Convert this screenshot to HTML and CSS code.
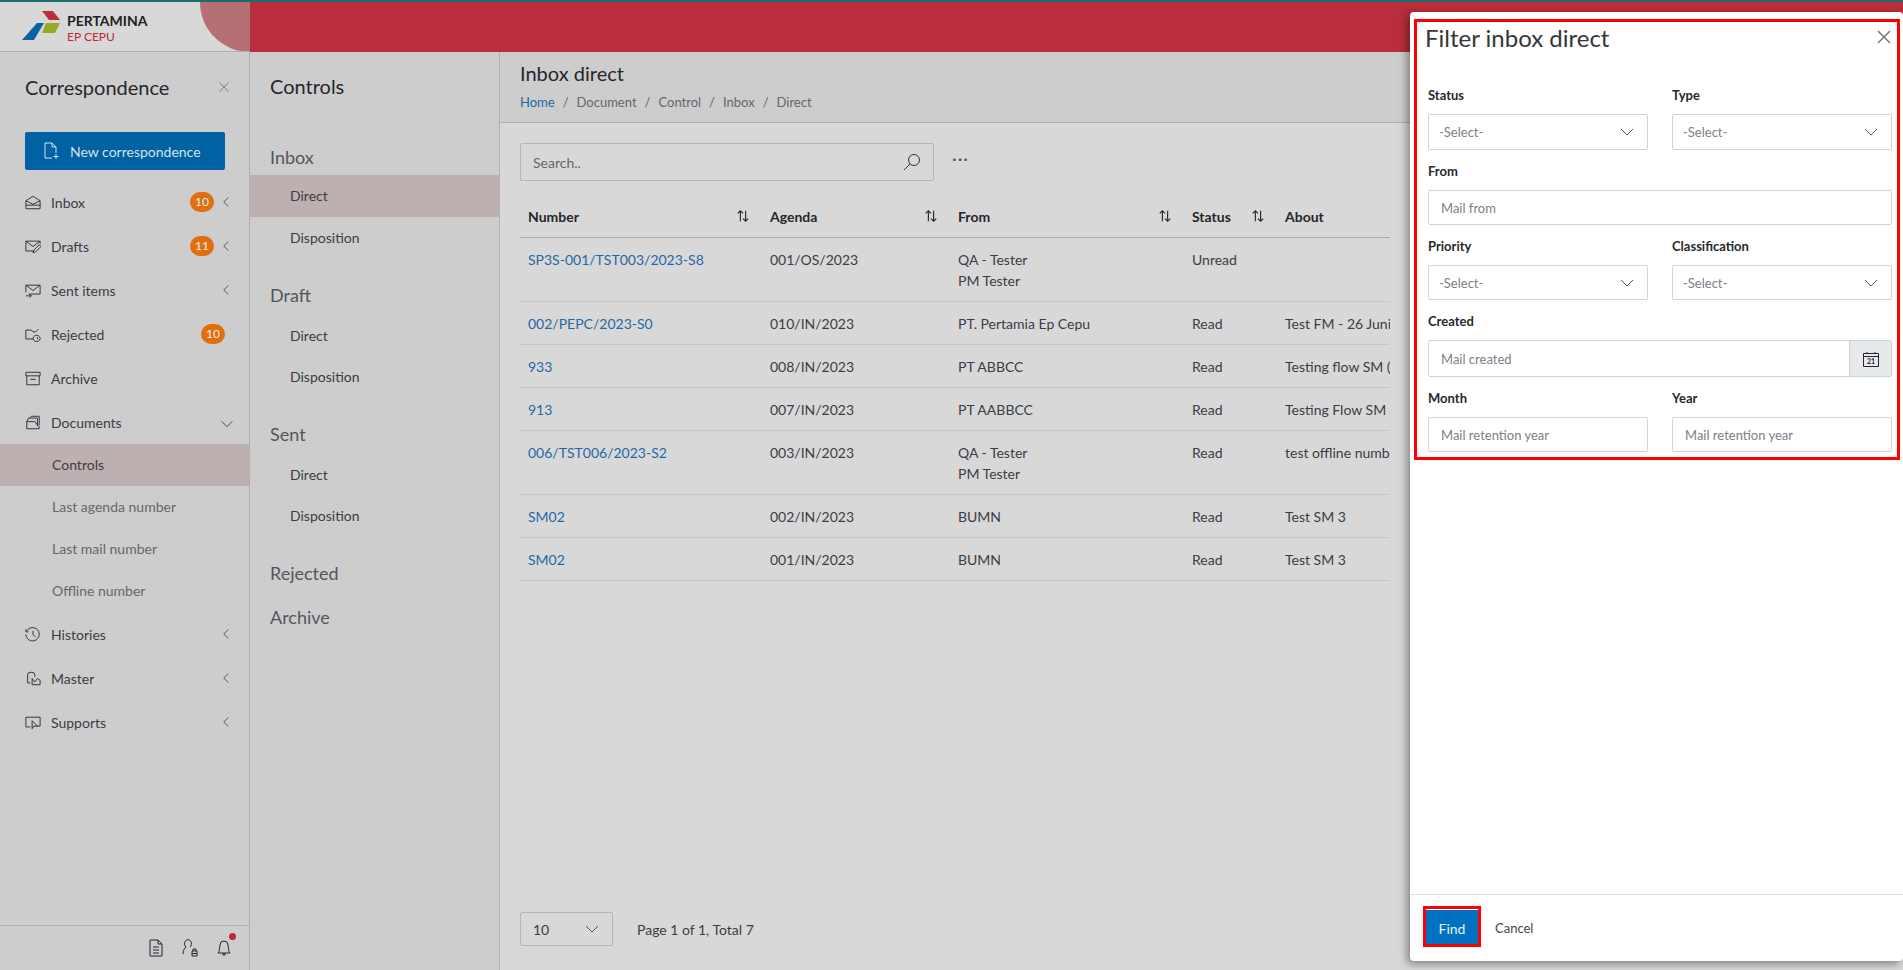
FILE: index.html
```html
<!DOCTYPE html>
<html lang="en">
<head>
<meta charset="utf-8">
<title>Inbox direct</title>
<link rel="stylesheet" href="styles.css">
</head>
<body>

<svg class="defs" aria-hidden="true">
  <symbol id="i-left" viewBox="0 0 16 16"><path d="M11 2 5 8l6 6"/></symbol>
  <symbol id="i-down" viewBox="0 0 16 16"><path d="M2 5l6 6 6-6"/></symbol>
  <symbol id="i-sort" viewBox="0 0 16 16"><path d="M5 14V2M2 5l3-3 3 3M11 2v12M8 11l3 3 3-3"/></symbol>
  <symbol id="i-x" viewBox="0 0 16 16"><path d="M2 2l12 12M14 2 2 14"/></symbol>
</svg>

<div class="topline"></div>
<header class="topbar">
  <div class="brand">
    <svg class="logo" viewBox="0 0 38 30" width="38" height="30">
      <polygon points="20,0 31,0 38,9 27,9" fill="#b8303f"/>
      <polygon points="15,12 22,12 12,29 0,29" fill="#0a62a5"/>
      <polygon points="24,12 38,12 33,22 20,22" fill="#93ab22"/>
    </svg>
    <div class="brand-text">
      <div class="brand-name">PERTAMINA</div>
      <div class="brand-sub">EP CEPU</div>
    </div>
    <div class="brand-curve"></div>
  </div>
</header>

<div class="layout">
  <aside class="sidebar">
    <div class="side-head">
      <h2>Correspondence</h2>
      <svg class="ico-x"><use href="#i-x"/></svg>
    </div>
    <a class="new-btn">
      <svg width="16" height="18" viewBox="0 0 16 18"><path d="M9 16H2V1h7l4 4v6M9 1v4h4M13 12v5M10.500 14.500h5"/></svg>
      New correspondence
    </a>
    <nav class="nav">
      <div class="nav-row">
        <svg class="nav-ico" viewBox="0 0 18 16"><path d="M1 6l8-5 8 5v9H1zM1 6l8 4 8-4M1 11h16"/></svg>
        <span class="nav-label">Inbox</span><span class="badge">10</span>
        <svg class="chev"><use href="#i-left"/></svg>
      </div>
      <div class="nav-row">
        <svg class="nav-ico" viewBox="0 0 18 16"><path d="M10 13H1V2h16v3M1 2l8 6 8-6M9 15l1-3 6-6 2 2-6 6z"/></svg>
        <span class="nav-label">Drafts</span><span class="badge">11</span>
        <svg class="chev"><use href="#i-left"/></svg>
      </div>
      <div class="nav-row">
        <svg class="nav-ico" viewBox="0 0 18 16"><path d="M4 12H17V2H1v8M1 2l8 6 8-6M1 14h6M5 12l2 2-2 2"/></svg>
        <span class="nav-label">Sent items</span>
        <svg class="chev"><use href="#i-left"/></svg>
      </div>
      <div class="nav-row">
        <svg class="nav-ico" viewBox="0 0 18 16"><path d="M9 13H1V3h6l2 2h3l3-3M13 9a4 3.500 0 1 0 .1 0M14 11v2M14 14v.5"/></svg>
        <span class="nav-label">Rejected</span><span class="badge shift">10</span>
      </div>
      <div class="nav-row">
        <svg class="nav-ico" viewBox="0 0 18 16"><path d="M1 1h16v4H1zM2 5v10h14V5M6 9h6"/></svg>
        <span class="nav-label">Archive</span>
      </div>
      <div class="nav-row">
        <svg class="nav-ico" viewBox="0 0 18 16"><path d="M2 15V7h9l5 6v2zM2 7l2-4h10v9M5 3l2-2h9v10"/></svg>
        <span class="nav-label">Documents</span>
        <svg class="chev chev-down"><use href="#i-down"/></svg>
      </div>
      <div class="nav-sub active">Controls</div>
      <div class="nav-sub">Last agenda number</div>
      <div class="nav-sub">Last mail number</div>
      <div class="nav-sub">Offline number</div>
      <div class="nav-row">
        <svg class="nav-ico" viewBox="0 0 18 16"><path d="M2 4a7.500 7.500 0 1 1-1 4M1 2v3h3M9 4v4l3 3"/></svg>
        <span class="nav-label">Histories</span>
        <svg class="chev"><use href="#i-left"/></svg>
      </div>
      <div class="nav-row">
        <svg class="nav-ico" viewBox="0 0 18 16"><path d="M3 3a4 2 0 0 1 8 0v3M3 3v10h3M8 15V8l3 4 3-4 3 2v5z"/></svg>
        <span class="nav-label">Master</span>
        <svg class="chev"><use href="#i-left"/></svg>
      </div>
      <div class="nav-row">
        <svg class="nav-ico" viewBox="0 0 18 16"><path d="M6 13H1V2h16v10h-4M8 6v9l2-3h4z"/></svg>
        <span class="nav-label">Supports</span>
        <svg class="chev"><use href="#i-left"/></svg>
      </div>
    </nav>
    <div class="side-foot">
      <svg class="foot-ico" viewBox="0 0 16 18"><path d="M2 1h8l4 4v12H2zM10 1v4h4M5 8h6M5 11h6M5 14h6"/></svg>
      <svg class="foot-ico" viewBox="0 0 16 18"><path d="M1 15c0-4 2-6 3-7a3.500 4 0 1 1 4 0M10 12h5v5h-5zM11 12v-2h3v2M10 14.500h5"/></svg>
      <span class="bell">
        <svg class="foot-ico" viewBox="0 0 16 18"><path d="M2 14c2-2 1-4 2-8a4 4 0 0 1 8 0c1 4 0 6 2 8zM7 14v2h2v-2"/></svg>
        <i class="dot"></i>
      </span>
    </div>
  </aside>

  <section class="subnav">
    <h2>Controls</h2>
    <div class="sub-group first">
      <div class="sub-title">Inbox</div>
      <div class="sub-item active">Direct</div>
      <div class="sub-item">Disposition</div>
    </div>
    <div class="sub-group">
      <div class="sub-title">Draft</div>
      <div class="sub-item">Direct</div>
      <div class="sub-item">Disposition</div>
    </div>
    <div class="sub-group">
      <div class="sub-title">Sent</div>
      <div class="sub-item">Direct</div>
      <div class="sub-item">Disposition</div>
    </div>
    <div class="sub-title plain">Rejected</div>
    <div class="sub-title plain">Archive</div>
  </section>

  <main class="main">
    <div class="page-head">
      <h1>Inbox direct</h1>
      <div class="crumbs"><a>Home</a><i>/</i>Document<i>/</i>Control<i>/</i>Inbox<i>/</i>Direct</div>
    </div>
    <div class="content">
      <div class="toolbar">
        <div class="search">
          <span>Search..</span>
          <svg width="18" height="18" viewBox="0 0 18 18"><circle cx="11" cy="7" r="5.500"/><path d="M7 11l-6 6"/></svg>
        </div>
        <span class="more">&middot;&middot;&middot;</span>
      </div>
      <table class="grid">
        <colgroup>
          <col class="c-number"><col class="c-agenda"><col class="c-from"><col class="c-status"><col>
        </colgroup>
        <thead>
          <tr>
            <th><div class="th">Number<svg><use href="#i-sort"/></svg></div></th>
            <th><div class="th">Agenda<svg><use href="#i-sort"/></svg></div></th>
            <th><div class="th">From<svg><use href="#i-sort"/></svg></div></th>
            <th><div class="th">Status<svg><use href="#i-sort"/></svg></div></th>
            <th>About</th>
          </tr>
        </thead>
        <tbody>
          <tr><td><a>SP3S-001/TST003/2023-S8</a></td><td>001/OS/2023</td><td>QA - Tester<br>PM Tester</td><td>Unread</td><td></td></tr>
          <tr><td><a>002/PEPC/2023-S0</a></td><td>010/IN/2023</td><td>PT. Pertamia Ep Cepu</td><td>Read</td><td>Test FM - 26 Juni</td></tr>
          <tr><td><a>933</a></td><td>008/IN/2023</td><td>PT ABBCC</td><td>Read</td><td>Testing flow SM (9-Mar)</td></tr>
          <tr><td><a>913</a></td><td>007/IN/2023</td><td>PT AABBCC</td><td>Read</td><td>Testing Flow SM (10-Mar)</td></tr>
          <tr><td><a>006/TST006/2023-S2</a></td><td>003/IN/2023</td><td>QA - Tester<br>PM Tester</td><td>Read</td><td>test offline number</td></tr>
          <tr><td><a>SM02</a></td><td>002/IN/2023</td><td>BUMN</td><td>Read</td><td>Test SM 3</td></tr>
          <tr><td><a>SM02</a></td><td>001/IN/2023</td><td>BUMN</td><td>Read</td><td>Test SM 3</td></tr>
        </tbody>
      </table>
      <div class="pager">
        <div class="page-size">10<svg><use href="#i-down"/></svg></div>
        <span>Page 1 of 1, Total 7</span>
      </div>
    </div>
  </main>
</div>

<aside class="drawer">
  <div class="drawer-head">
    <h3>Filter inbox direct</h3>
    <svg class="drawer-x"><use href="#i-x"/></svg>
  </div>
  <form class="filter">
    <div class="field">
      <label>Status</label>
      <div class="control select tall">-Select-<svg><use href="#i-down"/></svg></div>
    </div>
    <div class="field">
      <label>Type</label>
      <div class="control select tall">-Select-<svg><use href="#i-down"/></svg></div>
    </div>
    <div class="field wide">
      <label>From</label>
      <div class="control">Mail from</div>
    </div>
    <div class="field">
      <label>Priority</label>
      <div class="control select">-Select-<svg><use href="#i-down"/></svg></div>
    </div>
    <div class="field">
      <label>Classification</label>
      <div class="control select">-Select-<svg><use href="#i-down"/></svg></div>
    </div>
    <div class="field wide">
      <label>Created</label>
      <div class="control date">
        <span>Mail created</span>
        <span class="addon">
          <svg width="16" height="16" viewBox="0 0 16 16"><path d="M.5 2.500h15v13H.5zM.5 5.500h15M4 1v2M12 1v2"/><text x="8" y="13" text-anchor="middle">21</text></svg>
        </span>
      </div>
    </div>
    <div class="field">
      <label>Month</label>
      <div class="control">Mail retention year</div>
    </div>
    <div class="field">
      <label>Year</label>
      <div class="control">Mail retention year</div>
    </div>
  </form>
  <div class="drawer-foot">
    <button class="find" type="button">Find</button>
    <span class="cancel">Cancel</span>
  </div>
  <div class="mark mark-form"></div>
  <div class="mark mark-find"></div>
</aside>

</body>
</html>
```

FILE: styles.css
```css
* {box-sizing: border-box;}
html, body {margin: 0; height: 970px; overflow: hidden;}
body {font-family: "Lato", "Noto Sans", sans-serif; font-size: 14px; color: #2b2b33; background: #d8d8d8;}
h1, h2, h3 {margin: 0; font-weight: 400;}
a {color: #1f69a5;}
svg {fill: none; stroke: currentColor; stroke-width: 1;}
.defs {display: none;}

.topline {height: 2px; background: #1a6a70;}
.topbar {height: 50px; background: #b92d3c;}
.brand {position: relative; width: 250px; height: 50px; background: #d8d8d8; border-bottom: 1px solid #b0b0b0; display: flex; align-items: center; padding: 0 0 0 22px; overflow: hidden;}
.logo {flex: none; stroke: none; margin-top: -2px;}
.brand-text {margin-left: 7px; padding-top: 3px;}
.brand-name {font-weight: 700; font-size: 14px; line-height: 17px; color: #222;}
.brand-sub {font-size: 12px; line-height: 14px; color: #c0283a; margin-top: 1px;}
.brand-curve {position: absolute; right: 0; top: 0; width: 50px; height: 50px; background: #b57076; border-bottom-left-radius: 50px;}

.layout {display: flex; height: 918px;}

.sidebar {width: 250px; flex: none; background: #cdcdcd; border-right: 1px solid #b0b0b0; display: flex; flex-direction: column;}
.side-head {height: 80px; padding: 0 19px 10px 25px; display: flex; align-items: center; justify-content: space-between;}
.side-head h2 {font-size: 20px; line-height: 26px; color: #26262c;}
.ico-x {width: 12px; height: 12px; color: #666;}
.new-btn {display: flex; align-items: center; gap: 11px; margin: 0 24px 0 25px; height: 38px; padding-left: 18px; background: #0062a3; color: #d6e2ec; border-radius: 2px; font-size: 14px;}
.nav {margin-top: 10px;}
.nav-row {height: 44px; display: flex; align-items: center; padding: 0 17px 0 25px; color: #3c3c46;}
.nav-ico {width: 16px; height: 15px; flex: none; color: #2b2035;}
.nav-label {margin-left: 10px; flex: 1;}
.badge {width: 24px; height: 20px; line-height: 20px; border-radius: 10px; background: #e06f10; color: #eee; text-align: center; font-size: 12px; margin-right: 6px;}
.badge.shift {margin-right: 7px;}
.chev {width: 12px; height: 14px; color: #333; flex: none;}
.chev-down {width: 14px; margin-right: -2px; margin-top: 4px;}
.nav-sub {height: 42px; line-height: 42px; padding-left: 52px; color: #66666e;}
.nav-sub.active {background: #bcb1b0; color: #3c3c46;}
.side-foot {margin-top: auto; height: 45px; border-top: 1px solid #b0b0b0; display: flex; align-items: center; justify-content: flex-end; gap: 18px; padding: 0 17px 0 0;}
.foot-ico {width: 16px; height: 18px; color: #2b2035;}
.bell {position: relative; display: flex;}
.dot {position: absolute; right: -4px; top: -6px; width: 7px; height: 7px; border-radius: 50%; background: #c0283a;}

.subnav {width: 250px; flex: none; background: #cdcdcd; border-right: 1px solid #b0b0b0; padding-top: 19px;}
.subnav h2 {font-size: 20px; line-height: 30px; padding-left: 20px; color: #26262c; margin-bottom: 44px;}
.sub-group {margin-bottom: 25px;}
.sub-title {font-size: 18px; line-height: 24px; padding-left: 20px; color: #55555e; margin-bottom: 8px;}
.first .sub-title {margin-bottom: 6px;}
.sub-item {height: 41px; line-height: 41px; padding-left: 40px; color: #3c3c46;}
.sub-item.active {height: 42px; background: #bcb1b0;}
.sub-title.plain {margin-top: 2px; margin-bottom: 20px;}

.main {flex: 1; min-width: 0; display: flex; flex-direction: column;}
.page-head {height: 71px; background: #cdcdcd; border-bottom: 1px solid #b0b0b0; padding: 8px 20px 0;}
.page-head h1 {font-size: 20px; line-height: 26px; color: #26262c;}
.crumbs {margin-top: 7px; font-size: 13px; line-height: 18px; color: #66666e;}
.crumbs i {font-style: normal; margin: 0 8px;}
.content {flex: 1; padding: 20px 0 0 20px; display: flex; flex-direction: column;}
.toolbar {display: flex; align-items: flex-start; gap: 18px;}
.search {width: 414px; height: 38px; border: 1px solid #b4b4ba; border-radius: 2px; display: flex; align-items: center; justify-content: space-between; padding: 0 12px 0 12px; color: #66666e;}
.search svg {color: #333;}
.more {font-size: 18px; line-height: 30px; letter-spacing: 1px; color: #55555e;}

.grid {width: 870px; margin-top: 15px; border-collapse: collapse; table-layout: fixed;}
.c-number {width: 242px;}
.c-agenda {width: 188px;}
.c-from {width: 234px;}
.c-status {width: 93px;}
.grid th {height: 41px; padding: 0 8px; text-align: left; font-weight: 700; color: #26262c; border-bottom: 1px solid #acacac; white-space: nowrap;}
.th {display: flex; align-items: center; justify-content: space-between;}
.th svg {width: 14px; height: 14px; stroke-width: 1.300; margin-right: 4px;}
.grid td {padding: 11px 8px 10px; line-height: 21px; vertical-align: top; color: #3c3c46; border-bottom: 1px solid #c6c6c6; white-space: nowrap; overflow: hidden;}
.pager {margin-top: auto; padding-bottom: 24px; display: flex; align-items: center; gap: 24px; color: #3c3c46;}
.page-size {width: 93px; height: 34px; border: 1px solid #b4b4ba; border-radius: 2px; display: flex; align-items: center; justify-content: space-between; padding: 0 12px;}
.page-size svg {width: 16px; height: 16px; color: #555;}

.drawer {position: absolute; left: 1410px; top: 12px; right: 0; height: 949px; background: #fff; border-radius: 4px; box-shadow: -3px 3px 8px rgba(0,0,0,.4); display: flex; flex-direction: column;}
.drawer-head {height: 74px; padding: 13px 11px 0 15px; display: flex; justify-content: space-between; align-items: flex-start;}
.drawer-head h3 {font-size: 24px; line-height: 26px; color: #33363a;}
.drawer-x {width: 16px; height: 16px; color: #777; stroke-width: 1.500; margin-top: 4px;}
.filter {flex: 1; display: grid; grid-template-columns: 220px 220px; column-gap: 24px; row-gap: 12px; align-content: start; padding: 0 0 0 18px;}
.field label {display: block; font-weight: 700; font-size: 13px; line-height: 18px; color: #26292d; margin-bottom: 10px;}
.wide {grid-column: 1 / 3;}
.control {height: 35px; border: 1px solid #ced4da; border-radius: 2px; display: flex; align-items: center; justify-content: space-between; padding: 0 12px; font-size: 13px; color: #7b8187;}
.control.tall {height: 36px;}
.select {padding: 0 12px 0 10px;}
.select svg {width: 16px; height: 16px; color: #555;}
.date {height: 37px; padding-right: 0;}
.addon {width: 42px; height: 35px; background: #e7eaed; border-left: 1px solid #ced4da; display: flex; align-items: center; justify-content: center; color: #2b2035;}
.addon text {font-size: 7px; font-weight: 700; stroke: none; fill: #2b2035;}
.drawer-foot {height: 67px; border-top: 1px solid #dcdcdc; display: flex; align-items: center; padding: 0 0 0 16px; gap: 17px;}
.find {width: 52px; height: 36px; border: 0; background: #0070c0; color: #e8f1f8; font: inherit; font-size: 14px;}
.cancel {color: #44474b; font-size: 13px;}
.mark {position: absolute; border: 3px solid #f00; pointer-events: none;}
.mark-form {left: 4px; top: 7px; width: 486px; height: 441px;}
.mark-find {left: 13px; top: 894px; width: 58px; height: 41px;}
```
